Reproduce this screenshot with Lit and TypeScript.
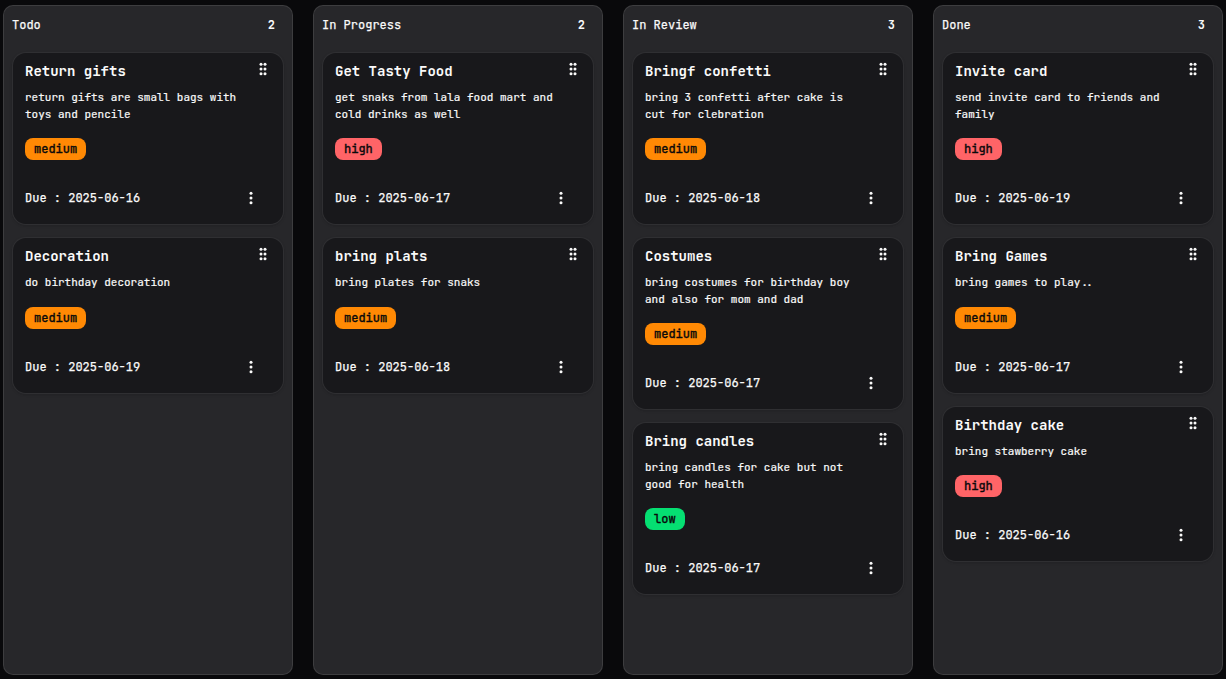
import { LitElement, html, css, svg } from "lit";
import { customElement, property } from "lit/decorators.js";

type Priority = "low" | "medium" | "high";
interface Task { title: string; text: string; priority: Priority; due: string }
interface Column { name: string; tasks: Task[] }

const board: Column[] = [
  { name: "Todo", tasks: [
    { title: "Return gifts", text: "return gifts are small bags with toys and pencile", priority: "medium", due: "2025-06-16" },
    { title: "Decoration", text: "do birthday decoration", priority: "medium", due: "2025-06-19" },
  ] },
  { name: "In Progress", tasks: [
    { title: "Get Tasty Food", text: "get snaks from lala food mart and cold drinks as well", priority: "high", due: "2025-06-17" },
    { title: "bring plats", text: "bring plates for snaks", priority: "medium", due: "2025-06-18" },
  ] },
  { name: "In Review", tasks: [
    { title: "Bringf confetti", text: "bring 3 confetti after cake is cut for clebration", priority: "medium", due: "2025-06-18" },
    { title: "Costumes", text: "bring costumes for birthday boy and also for mom and dad", priority: "medium", due: "2025-06-17" },
    { title: "Bring candles", text: "bring candles for cake but not good for health", priority: "low", due: "2025-06-17" },
  ] },
  { name: "Done", tasks: [
    { title: "Invite card", text: "send invite card to friends and family", priority: "high", due: "2025-06-19" },
    { title: "Bring Games", text: "bring games to play..", priority: "medium", due: "2025-06-17" },
    { title: "Birthday cake", text: "bring stawberry cake", priority: "high", due: "2025-06-16" },
  ] },
];

const dots = (xs: number[], ys: number[], r: number) =>
  xs.map((x) => ys.map((y) => svg`<circle cx=${x} cy=${y} r=${r}></circle>`));

@customElement("task-card")
export class TaskCard extends LitElement {
  @property({ attribute: false }) task!: Task;

  static styles = css`
    :host { display: block; }
    .card {
      box-sizing: border-box;
      display: flex;
      flex-direction: column;
      padding: 7px 12px 13.9px;
      border: 1px solid rgba(255, 255, 255, 0.1);
      border-radius: 14px;
      background: #18181b;
      box-shadow: 0 1px 3px rgba(0, 0, 0, 0.1), 0 1px 2px -1px rgba(0, 0, 0, 0.1);
    }
    .head { display: flex; justify-content: space-between; }
    .title { margin: 0; font-size: 14px; line-height: 23px; font-weight: 700; }
    .text {
      margin: 5.85px 24px 0 0;
      font-size: 11px;
      line-height: 16.5px;
      -webkit-text-stroke: 0.2px currentColor;
    }
    .badge {
      align-self: flex-start;
      box-sizing: border-box;
      height: 22px;
      margin-top: 16px;
      padding: 0 9px;
      border-radius: 8px;
      color: #09090b;
      font-size: 12px;
      line-height: 22px;
      -webkit-text-stroke: 0.4px currentColor;
    }
    .high { background: #ff6467; }
    .medium { background: #ff8904; }
    .low { background: #05df72; }
    .foot {
      display: flex;
      align-items: center;
      justify-content: space-between;
      height: 24px;
      margin-top: 26px;
      padding-right: 12px;
      font-size: 12px;
      -webkit-text-stroke: 0.25px currentColor;
    }
    svg { display: block; width: 16px; height: 16px; fill: #fafafa; }
    .grip { margin-top: 1px; }
  `;

  render() {
    const t = this.task;
    return html`
      <article class="card">
        <div class="head">
          <h3 class="title">${t.title}</h3>
          <svg class="grip" viewBox="0 0 16 16">${dots([6, 10], [3.3, 8, 12.7], 1.5)}</svg>
        </div>
        <p class="text">${t.text}</p>
        <span class="badge ${t.priority}">${t.priority}</span>
        <div class="foot">
          <span>Due : ${t.due}</span>
          <svg viewBox="0 0 16 16">${dots([8], [3.3, 8, 12.7], 1.5)}</svg>
        </div>
      </article>
    `;
  }
}

@customElement("app-root")
export class AppRoot extends LitElement {
  static styles = css`
    :host {
      box-sizing: border-box;
      display: grid;
      grid-template-columns: repeat(4, 290px);
      gap: 20px;
      height: 679px;
      padding: 5px 3px 4px;
      overflow: hidden;
      background: #09090b;
      color: #fafafa;
      font-family: "JetBrains Mono", "DejaVu Sans Mono", monospace;
    }
    .column {
      box-sizing: border-box;
      padding: 0 8px;
      border: 1px solid rgba(255, 255, 255, 0.1);
      border-radius: 10px;
      background: #27272a;
    }
    .bar {
      display: flex;
      align-items: center;
      justify-content: space-between;
      height: 38px;
      padding-right: 9px;
      font-size: 12px;
    }
    .name {
      margin: 0;
      font-size: 12px;
      font-weight: 400;
      -webkit-text-stroke: 0.25px currentColor;
    }
    .count { font-weight: 700; }
    .list { display: flex; flex-direction: column; gap: 12.3px; padding-top: 8.4px; }
  `;

  render() {
    return board.map((c) => html`
      <section class="column">
        <header class="bar">
          <h2 class="name">${c.name}</h2>
          <span class="count">${c.tasks.length}</span>
        </header>
        <div class="list">
          ${c.tasks.map((t) => html`<task-card .task=${t}></task-card>`)}
        </div>
      </section>
    `);
  }
}
